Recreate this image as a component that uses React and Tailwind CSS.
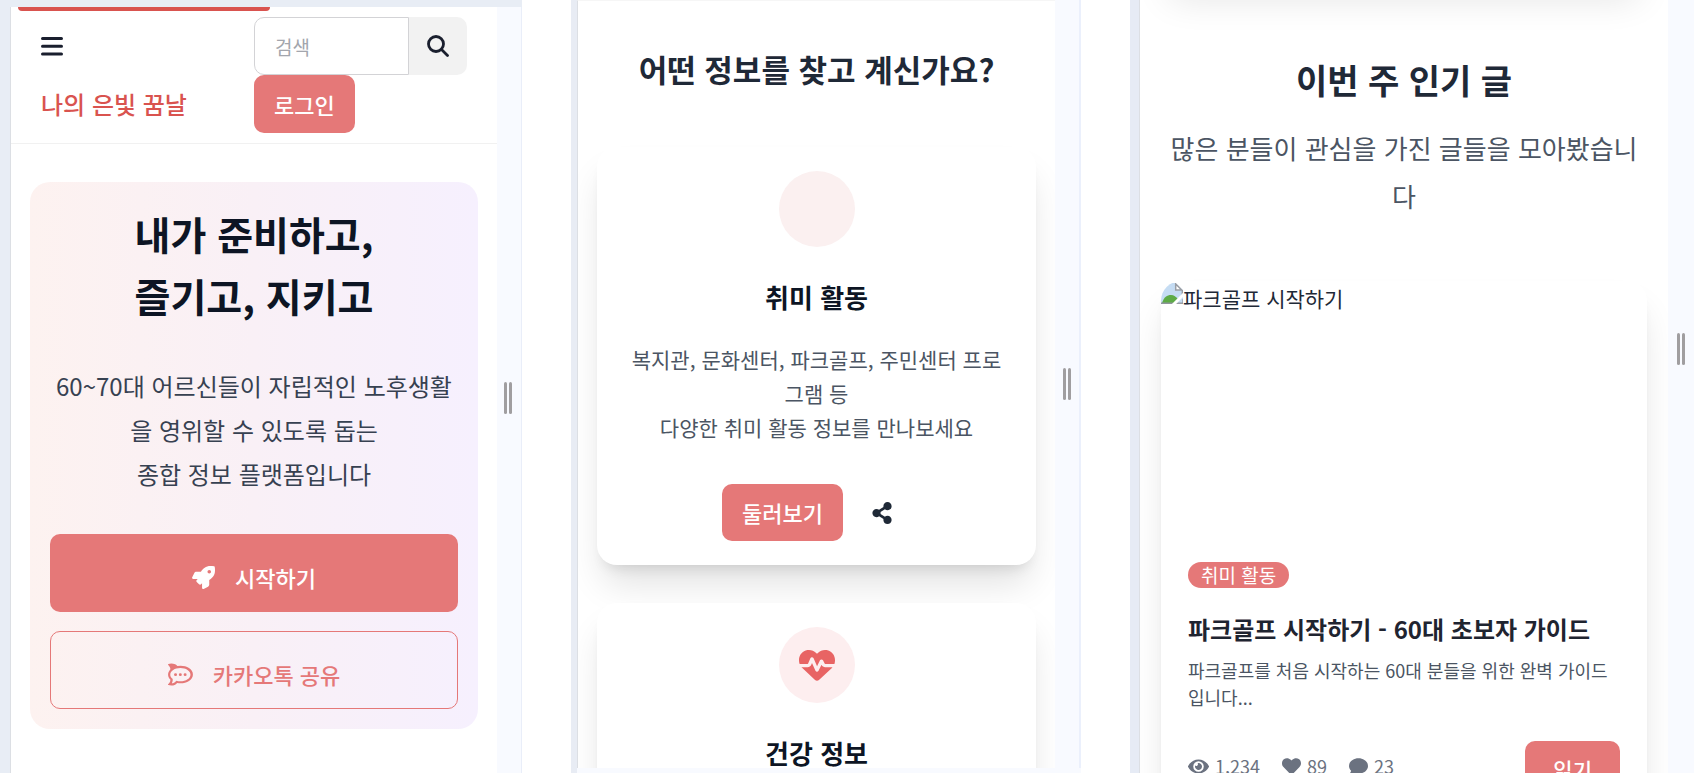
import { useState } from "react";
import { FaRocket, FaRocketchat, FaEye, FaHeart, FaComment, FaShareAlt } from "react-icons/fa";
import { FaHeartPulse } from "react-icons/fa6";

const cardShadow = "shadow-[0_24px_36px_-6px_rgba(0,0,0,0.12),0_10px_14px_-8px_rgba(0,0,0,0.12)]";

// Drag handle on the right edge of every preview pane
function Handle() {
  return (
    <div className="flex gap-[2px]">
      <span className="w-[3px] h-8 rounded-full bg-[#a09ea0]" />
      <span className="w-[3px] h-8 rounded-full bg-[#a09ea0]" />
    </div>
  );
}

function Header({ search, setSearch }) {
  return (
    <header className="grid grid-cols-2 pt-[6px] pb-[10px] border-b border-[#f1f1f1]">
      <div className="flex flex-col items-start pl-[30px]">
        <button type="button" aria-label="메뉴" className="h-[58px] flex items-center text-[#1a1f2e]">
          <svg width="22" height="20" viewBox="0 0 22 20" fill="none" stroke="currentColor" strokeWidth="3" strokeLinecap="round">
            <path d="M1.5 2.5h19M1.5 10.2h19M1.5 17.9h19" />
          </svg>
        </button>
        <a href="#home" className="h-[58px] flex items-center text-2xl font-medium text-[#d9534f] whitespace-nowrap">
          나의 은빛 꿈날
        </a>
      </div>

      <div className="flex flex-col items-start pr-[30px]">
        <form className="flex w-full" onSubmit={(e) => e.preventDefault()}>
          <input
            type="text"
            aria-label="검색"
            placeholder="검색"
            value={search}
            onChange={(e) => setSearch(e.target.value)}
            className="flex-1 min-w-0 h-[58px] px-5 border border-[#d3d3d6] rounded-l-[10px] bg-white text-[19px] placeholder:text-[#a3a6ad] outline-none"
          />
          <button
            type="submit"
            aria-label="찾기"
            className="w-[58px] h-[58px] flex justify-center items-center rounded-r-[10px] bg-[#f2f2f2] text-[#1a1f2e]"
          >
            <svg width="22" height="22" viewBox="0 0 22 22" fill="none" stroke="currentColor" strokeWidth="2.8" strokeLinecap="round">
              <circle cx="9" cy="9" r="7.5" />
              <path d="M14.5 14.5l6 6" />
            </svg>
          </button>
        </form>
        <button type="button" className="h-[58px] px-5 rounded-[10px] bg-[#e57878] text-white text-[22px] font-medium">
          로그인
        </button>
      </div>
    </header>
  );
}

function Hero() {
  return (
    <section className="mx-[19px] mt-[38px] p-5 rounded-[20px] bg-linear-to-r from-[#fdf2f0] via-[#f9f0f6] to-[#f6f0fe] text-center">
      <h1 className="text-[39px] leading-[62px] font-bold text-[#0d1524]">
        내가 준비하고,
        <br />
        즐기고, 지키고
      </h1>
      <p className="mt-[38px] text-2xl leading-[44px] text-[#374151]">
        60~70대 어르신들이 자립적인 노후생활
        <br />
        을 영위할 수 있도록 돕는
        <br />
        종합 정보 플랫폼입니다
      </p>
      <div className="mt-[38px] flex flex-col gap-[19px]">
        <button
          type="button"
          className="w-full h-[78px] pt-2 flex justify-center items-center gap-5 rounded-[10px] bg-[#e57878] text-white text-[22px] font-medium"
        >
          <FaRocket className="w-[23px] h-[23px]" />
          시작하기
        </button>
        <button
          type="button"
          className="w-full h-[78px] pt-2 flex justify-center items-center gap-5 rounded-[10px] border border-[#e57878] text-[#e57878] text-[22px] font-medium"
        >
          <FaRocketchat className="w-[25px] h-[25px]" />
          카카오톡 공유
        </button>
      </div>
    </section>
  );
}

function CategoryCard({ title, lines, icon, circle }) {
  return (
    <article className={`p-6 rounded-[20px] bg-white text-center ${cardShadow}`}>
      <div className={`w-[76px] h-[76px] mx-auto flex justify-center items-center rounded-full ${circle}`}>
        {icon}
      </div>
      <h3 className="mt-[30px] text-[26px] leading-10 font-bold text-[#0d1524]">{title}</h3>
      <p className="mt-[25px] text-[21px] leading-[34px] text-[#4b5563]">
        {lines.map((line) => (
          <span key={line} className="block">{line}</span>
        ))}
      </p>
      <div className="mt-10 flex justify-center gap-[10px]">
        <button type="button" className="h-[57px] px-5 rounded-[10px] bg-[#e57878] text-white text-[22px] font-medium">
          둘러보기
        </button>
        <button type="button" aria-label="공유" className="h-[57px] px-[18px] text-[#1f2937]">
          <FaShareAlt className="w-[22px] h-[22px]" />
        </button>
      </div>
    </article>
  );
}

// Placeholder shown when the thumbnail could not be loaded
function BrokenImage({ alt }) {
  return (
    <div className="h-[254px] flex items-start rounded-t-[20px] overflow-hidden text-[21px] leading-[34px] text-[#1f2937]">
      <svg className="mt-[2px] shrink-0" width="22" height="21" viewBox="0 0 22 21">
        <path d="M0 0h15l7 7v14H0z" fill="#c5dcf3" />
        <path d="M15 0h7v7z" fill="#fff" />
        <path d="M1 20c2-6 5-8 9-8 3 0 5 2 7 4l-5 5H1z" fill="#5dab46" />
        <path d="M0 20.3h12" stroke="#8f959c" strokeWidth="1.5" />
        <path d="M14.7 1v6h6z" fill="#fff" stroke="#9a9ea5" strokeWidth="1.5" />
        <path d="M21.3 7v5M15 20.3h7v-4" fill="none" stroke="#9a9ea5" strokeWidth="1.4" />
        <path d="M23 11L12 22" stroke="#fff" strokeWidth="3" />
      </svg>
      {alt}
    </div>
  );
}

function Stat({ icon, value }) {
  return (
    <span className="flex items-center gap-[6px]">
      {icon}
      {value}
    </span>
  );
}

function PostCard() {
  return (
    <article className={`rounded-[20px] bg-white ${cardShadow}`}>
      <BrokenImage alt="파크골프 시작하기" />
      <div className="p-[27px]">
        <span className="block w-fit h-[26px] px-[13px] rounded-full bg-[#e57878] text-white text-[19px] leading-[26px]">
          취미 활동
        </span>
        <h3 className="mt-[23px] text-2xl leading-9 font-bold text-[#1f2430]">
          파크골프 시작하기 - 60대 초보자 가이드
        </h3>
        <p className="mt-[10px] text-[18px] leading-[27px] text-[#4b5563] break-all">
          파크골프를 처음 시작하는 60대 분들을 위한 완벽 가이드입니다...
        </p>
        <div className="mt-[30px] flex justify-between items-start">
          <div className="py-3 flex gap-[22px] text-[18px] leading-[27px] text-[#6b7280]">
            <Stat icon={<FaEye className="w-[21px] h-[21px]" />} value="1,234" />
            <Stat icon={<FaHeart className="w-[19px] h-[19px]" />} value="89" />
            <Stat icon={<FaComment className="w-[19px] h-[19px]" />} value="23" />
          </div>
          <button type="button" className="h-[57px] px-7 rounded-[10px] bg-[#e57878] text-white text-[21px] font-medium">
            읽기
          </button>
        </div>
      </div>
    </article>
  );
}

export default function App() {
  const [search, setSearch] = useState("");

  return (
    <div className="h-screen overflow-hidden bg-white grid grid-cols-[522fr_510fr_564fr] gap-[49px] font-['Noto_Sans_CJK_KR',sans-serif]" lang="ko">
      {/* Home */}
      <div className="min-w-0 flex overflow-hidden pl-[10px] pt-[7px] bg-[#e8edf5]">
        <main className="flex-1 min-w-0 overflow-hidden border-l border-[#dcdfe4] bg-white">
          <div className="ml-[7px] w-[252px] h-1 rounded-b-full bg-[#d9534f]" />
          <Header search={search} setSearch={setSearch} />
          <Hero />
        </main>
        <div className="w-[25px] flex justify-center items-start pt-[375px] pr-[3px] bg-[#f8faff] border-r border-[#e9eef9]">
          <Handle />
        </div>
      </div>

      {/* Categories */}
      <div className="min-w-0 flex overflow-hidden pl-[6px] bg-[#e8ecf4]">
        <div className="flex-1 min-w-0 flex pb-[5px] bg-[#f8faff]">
          <main className="flex-1 min-w-0 overflow-hidden border-l border-[#dcdfe4] border-t border-t-[#f6f6f6] bg-white px-[19px] pt-11">
            <h2 className="text-[31px] leading-[48px] font-bold text-[#1f2937] text-center whitespace-nowrap">
              어떤 정보를 찾고 계신가요?
            </h2>
            <div className="mt-[54px] flex flex-col gap-[38px]">
              <CategoryCard
                title="취미 활동"
                lines={["복지관, 문화센터, 파크골프, 주민센터 프로", "그램 등", "다양한 취미 활동 정보를 만나보세요"]}
                circle="bg-[#fbf0f0]"
              />
              <CategoryCard
                title="건강 정보"
                lines={[]}
                icon={<FaHeartPulse className="w-9 h-9 text-[#e86464]" />}
                circle="bg-[#fdeeef]"
              />
            </div>
          </main>
          <div className="w-[26px] flex justify-center items-start pt-[368px] border-r-2 border-[#ebf0fc]">
            <Handle />
          </div>
        </div>
      </div>

      {/* Popular posts */}
      <div className="min-w-0 flex overflow-hidden pl-[9px] bg-[#e6ebf5]">
        <main className="flex-1 min-w-0 overflow-hidden border-l border-[#dcdfe4] bg-white px-[21px]">
          <div className={`h-10 -mt-[60px] rounded-[20px] bg-white ${cardShadow}`} />
          <div className="pt-[74px] text-center">
            <h2 className="text-[34px] leading-[52px] font-bold text-[#1f2937]">이번 주 인기 글</h2>
            <p className="mt-[18px] text-[26px] leading-[48px] text-[#4b5563] break-all">
              많은 분들이 관심을 가진 글들을 모아봤습니
              <br />다
            </p>
          </div>
          <div className="mt-[61px]">
            <PostCard />
          </div>
        </main>
        <div className="w-[26px] flex justify-center items-start pt-[333px] bg-[#f8faff]">
          <Handle />
        </div>
      </div>
    </div>
  );
}
